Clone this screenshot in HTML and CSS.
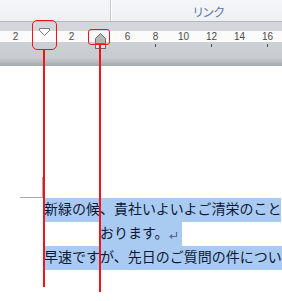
FILE: index.html
```html
<!DOCTYPE html>
<html lang="ja">
<head>
<meta charset="utf-8">
<link rel="stylesheet" href="styles.css">
</head>
<body>
<div class="page">
  <div class="ribbon">
    <div class="group-left"></div>
    <div class="group-sep"></div>
    <div class="group-right"><span class="link-label">リンク</span></div>
  </div>
  <div class="ruler">
    <div class="ruler-top"></div>
    <div class="ruler-scale">
      <span class="num">2</span><span class="num"></span><span class="num">2</span><span class="num"></span><span class="num">6</span><span class="num">8</span><span class="num">10</span><span class="num">12</span><span class="num">14</span><span class="num">16</span>
    </div>
    <div class="ruler-bottom">
      <div class="tabs"><i class="tab"></i><i class="tab"></i><i class="tab"></i></div>
    </div>
  </div>
  <div class="doc">
    <div class="crop"></div>
    <div class="line"><span class="sel">新緑の候、貴社いよいよご清栄のこと</span></div>
    <div class="line indent"><span class="sel sel-end">おります。<svg class="para" width="9" height="7" viewBox="0 0 9 7"><path d="M7.5 0 V4.5 H2.5" fill="none" stroke="#5b6b8c" stroke-width="1.2"/><polygon points="0,4.5 3.2,2 3.2,7" fill="#5b6b8c"/></svg></span></div>
    <div class="line"><span class="sel">早速ですが、先日のご質問の件につい</span></div>
  </div>

  <svg class="marker marker-first" width="11" height="8" viewBox="0 0 11 8"><polygon points="0.5,0.5 10.5,0.5 10.5,2.5 5.5,7.5 0.5,2.5" fill="#ffffff" stroke="#7a7a7a"/></svg>
  <svg class="marker marker-hang" width="11" height="16" viewBox="0 0 11 16"><polygon points="5.5,0.5 10.5,5.5 10.5,10.5 0.5,10.5 0.5,5.5" fill="#b6b6b6" stroke="#6c6c6c"/><rect x="0.5" y="10.5" width="10" height="5" fill="#e4e4e4" stroke="#6c6c6c"/></svg>

  <div class="callout box1"></div>
  <div class="callout box2"></div>
  <div class="guide g1"></div>
  <div class="guide g2"></div>
</div>
</body>
</html>
```

FILE: styles.css
```css
html, body {
  margin: 0;
  padding: 0;
  background: #ffffff;
}

.page {
  position: relative;
  width: 282px;
  height: 301px;
  overflow: hidden;
  background: #ffffff;
}

/* Ribbon */
.ribbon {
  display: flex;
  height: 21px;
  background: linear-gradient(#f5f6f8, #eef0f3);
  border-bottom: 1px solid #b4b8be;
}
.group-left {
  width: 110px;
  flex: none;
}
.group-sep {
  width: 1px;
  flex: none;
  background: #c4c7cd;
  border-right: 1px solid #ffffff;
}
.group-right {
  flex: 1;
  padding-left: 81px;
  padding-top: 3px;
}
.link-label {
  font-family: "Noto Sans CJK JP", sans-serif;
  font-size: 12px;
  line-height: 15px;
  color: #6477a6;
  font-feature-settings: "palt";
}

/* Ruler */
.ruler {
  height: 44px;
}
.ruler-top {
  height: 9px;
  background: #d3d6da;
}
.ruler-scale {
  display: flex;
  height: 11px;
  padding-left: 1.5px;
  background: #fbfbfb;
  font-family: "Liberation Sans", sans-serif;
  font-size: 10px;
  line-height: 11px;
  color: #4a4a4a;
}
.num {
  width: 28px;
  flex: none;
  text-align: center;
}
.ruler-bottom {
  height: 24px;
  box-sizing: border-box;
  padding-top: 2px;
  background: linear-gradient(to bottom, #cdd0d4 0, #c8cbd0 65%, #a5a8ad 100%);
}
.tabs {
  display: flex;
  padding-left: 155px;
}
.tab {
  width: 56px;
  height: 3px;
  flex: none;
  background: linear-gradient(to right, #4d4d4d 1px, transparent 1px);
}

/* Document */
.doc {
  padding-top: 111px;
}
.crop {
  margin-left: 20px;
  width: 22px;
  height: 20px;
  border-right: 1px solid #a8a8a8;
  border-bottom: 1px solid #a8a8a8;
}
.line {
  height: 24px;
  padding-left: 44px;
  white-space: nowrap;
  overflow: hidden;
  font-family: "Noto Sans CJK JP", sans-serif;
  font-size: 14px;
  line-height: 20px;
  color: #0e1836;
}
.line.indent {
  padding-left: 100px;
}
.sel {
  display: inline-block;
  height: 24px;
  vertical-align: top;
  background: #a9cbf1;
}
.sel-end {
  padding-right: 4px;
}
.para {
  vertical-align: -1px;
}

/* Overlays */
.marker {
  position: absolute;
}
.marker-first {
  left: 39px;
  top: 28px;
}
.marker-hang {
  left: 95px;
  top: 33px;
}
.callout {
  position: absolute;
  box-sizing: border-box;
  border: 1px solid #f2121c;
}
.box1 {
  left: 32px;
  top: 20px;
  width: 25px;
  height: 30px;
  border-radius: 5px;
}
.box2 {
  left: 88px;
  top: 29px;
  width: 22px;
  height: 16px;
  border-radius: 3px;
}
.guide {
  position: absolute;
  width: 2px;
  background: #f2121c;
}
.g1 {
  left: 43px;
  top: 49px;
  height: 238px;
}
.g2 {
  left: 99px;
  top: 44px;
  height: 248px;
}
```
